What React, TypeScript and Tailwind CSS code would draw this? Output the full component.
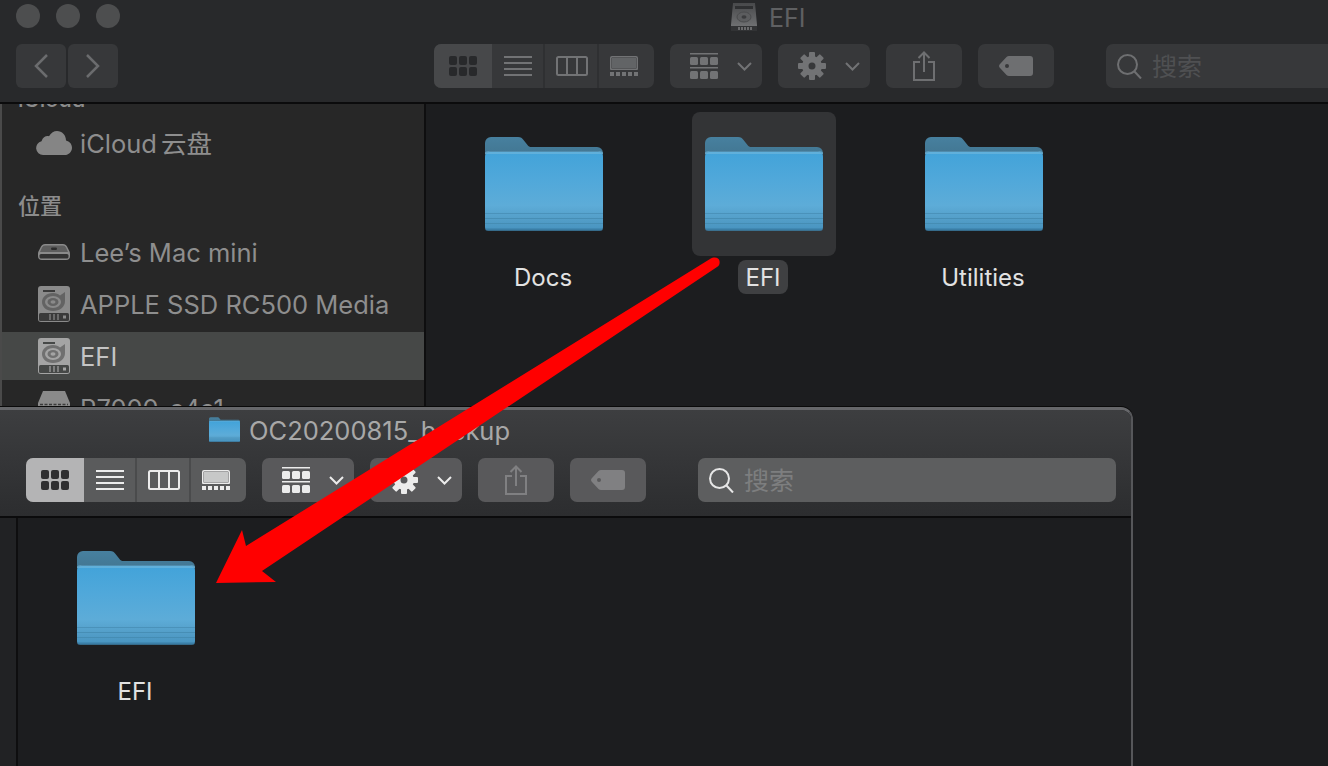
const font = "font-['Inter','Noto_Sans_CJK_SC',sans-serif]";

function Folder({ className }: { className: string }) {
  return (
    <svg viewBox="0 0 118 94" className={className}>
      <defs>
        <linearGradient id="folderBack" x1="0" y1="0" x2="0" y2="1">
          <stop offset="0" stopColor="#47809f" />
          <stop offset="1" stopColor="#3f7089" />
        </linearGradient>
        <linearGradient id="folderFront" x1="0" y1="0" x2="0" y2="1">
          <stop offset="0" stopColor="#42a3d9" />
          <stop offset="0.35" stopColor="#50a8da" />
          <stop offset="0.68" stopColor="#5dacd8" />
          <stop offset="0.84" stopColor="#549fc9" />
          <stop offset="1" stopColor="#4793bf" />
        </linearGradient>
      </defs>
      <path
        d="M0 6a6 6 0 0 1 6-6h27c3 0 4 1 5.500 3l4 5c1 1.500 2 2 4 2h65.500a6 6 0 0 1 6 6v14H0z"
        fill="url(#folderBack)"
      />
      <path
        d="M0 20a5 5 0 0 1 5-5h108a5 5 0 0 1 5 5v70a3.500 3.500 0 0 1-3.500 3.500H3.500A3.500 3.500 0 0 1 0 90z"
        fill="url(#folderFront)"
      />
      <path d="M0 15.500a5 5 0 0 1 5-1h108a5 5 0 0 1 5 1v1.500H0z" fill="#6cb5dc" opacity="0.7" />
      <rect x="0" y="76" width="118" height="1" fill="#4187ad" opacity="0.6" />
      <rect x="0" y="81" width="118" height="1" fill="#4187ad" opacity="0.7" />
      <rect x="0" y="86" width="118" height="1" fill="#4187ad" opacity="0.7" />
      <rect x="0.5" y="91.500" width="117" height="2" rx="1" fill="#3a7ea6" />
    </svg>
  );
}

function Disk({ body, mark, dark }: { body: string; mark: string; dark: string }) {
  return (
    <svg viewBox="0 0 32 36" className="h-[36px] w-[32px]">
      <path d="M3 0h26a3 3 0 0 1 3 3v30a3 3 0 0 1-3 3H3a3 3 0 0 1-3-3V3a3 3 0 0 1 3-3z" fill={body} />
      <rect x="5" y="4" width="12" height="2" fill={dark} />
      <path
        d="M27 6v9c0 6-5 10-12 10C8.500 25 4 21 4 16s4.500-9 11-9c3 0 5.500 1 7 2.500z"
        fill={mark}
      />
      <ellipse cx="15" cy="16" rx="8" ry="6" fill={body} />
      <ellipse cx="15" cy="16" rx="5.500" ry="4" fill={mark} />
      <ellipse cx="15" cy="16" rx="2.500" ry="1.800" fill={body} />
      <rect x="1" y="27" width="30" height="8" rx="1.500" fill={dark} />
      <path d="M12 28v6M16 28v6M20 28v6" stroke={body} strokeWidth="1.200" />
      <rect x="25" y="29.500" width="3" height="3" fill={body} />
    </svg>
  );
}

function TitleDisk() {
  return (
    <svg viewBox="0 0 28 28" className="h-[28px] w-[28px]">
      <defs>
        <linearGradient id="titleDisk" x1="0" y1="0" x2="0" y2="1">
          <stop offset="0" stopColor="#48494b" />
          <stop offset="1" stopColor="#77787a" />
        </linearGradient>
      </defs>
      <path d="M3 0h22l2 22v6H1v-6z" fill="url(#titleDisk)" />
      <rect x="5" y="3" width="18" height="3" fill="#2f3032" />
      <ellipse cx="14" cy="14" rx="7" ry="5" fill="#5c5d5f" stroke="#4a4b4d" />
      <ellipse cx="14" cy="14" rx="2.500" ry="1.800" fill="#3b3c3e" />
      <rect x="1" y="23" width="26" height="5" fill="#323335" />
      <path d="M9 24v3M12 24v3M15 24v3M18 24v3M21 24v3" stroke="#a2a3a5" strokeWidth="1" />
    </svg>
  );
}

function ViewGrid({ className }: { className: string }) {
  return (
    <svg viewBox="0 0 28 20" className={className} fill="currentColor">
      {[0, 10, 20].map((x) =>
        [0, 11].map((y) => <rect key={`${x}${y}`} x={x} y={y} width="8" height="9" rx="2" />),
      )}
    </svg>
  );
}

function ViewList({ className }: { className: string }) {
  return (
    <svg viewBox="0 0 28 20" className={className} fill="currentColor">
      <rect y="0" width="28" height="2" />
      <rect y="6" width="28" height="2" />
      <rect y="12" width="28" height="2" />
      <rect y="18" width="28" height="2" />
    </svg>
  );
}

function ViewColumns({ className }: { className: string }) {
  return (
    <svg viewBox="0 0 32 20" className={className} fill="none" stroke="currentColor" strokeWidth="2">
      <rect x="1" y="1" width="30" height="18" rx="1.500" />
      <path d="M11 1v18M21 1v18" />
    </svg>
  );
}

function ViewGallery({ className }: { className: string }) {
  return (
    <svg viewBox="0 0 28 20" className={className} fill="currentColor">
      <path d="M2 0h24a2 2 0 0 1 2 2v11a1 1 0 0 1-1 1H1a1 1 0 0 1-1-1V2a2 2 0 0 1 2-2zM2 1.500a.5.5 0 0 0-.5.5v10.500h25V2a.5.5 0 0 0-.5-.5z" />
      <rect x="2" y="2" width="24" height="10" opacity="0.75" />
      {[0, 6, 12, 18, 24].map((x) => (
        <rect key={x} x={x} y="16" width="4" height="4" />
      ))}
    </svg>
  );
}

function Arrange({ className }: { className: string }) {
  return (
    <svg viewBox="0 0 28 26" className={className} fill="currentColor">
      <rect y="0" width="28" height="1.500" />
      <rect y="14" width="28" height="1.500" />
      {[0, 10, 20].map((x) => (
        <g key={x}>
          <rect x={x} y="4" width="8" height="8" rx="1.500" />
          <rect x={x} y="18" width="8" height="8" rx="1.500" />
        </g>
      ))}
    </svg>
  );
}

function Chevron({ className }: { className: string }) {
  return (
    <svg viewBox="0 0 15 9" className={className} fill="none" stroke="currentColor" strokeWidth="2">
      <path d="M1 1l6.500 6.500L14 1" />
    </svg>
  );
}

function Gear({ className }: { className: string }) {
  const teeth = [0, 45, 90, 135, 180, 225, 270, 315];
  return (
    <svg viewBox="0 0 28 28" className={className} fill="currentColor">
      {teeth.map((a) => (
        <rect key={a} x="11" y="0" width="6" height="7" rx="1" transform={`rotate(${a} 14 14)`} />
      ))}
      <path
        fillRule="evenodd"
        d="M14 4a10 10 0 1 1 0 20a10 10 0 0 1 0-20zM14 10.500a3.500 3.500 0 1 0 0 7a3.500 3.500 0 0 0 0-7z"
      />
    </svg>
  );
}

function Share({ className }: { className: string }) {
  return (
    <svg viewBox="0 0 22 30" className={className} fill="none" stroke="currentColor" strokeWidth="2">
      <path d="M7 11H1v18h20V11h-6" />
      <path d="M11 21V1.500M5.500 7L11 1.500 16.500 7" />
    </svg>
  );
}

function Tag({ className }: { className: string }) {
  return (
    <svg viewBox="0 0 34 20" className={className} fill="currentColor">
      <path
        fillRule="evenodd"
        d="M10 0h21a3 3 0 0 1 3 3v14a3 3 0 0 1-3 3H10c-1 0-1.800-.4-2.500-1L1 12c-1.300-1.200-1.300-2.800 0-4l6.500-7C8.200.4 9 0 10 0zM8 8a2 2 0 1 0 0 4a2 2 0 0 0 0-4z"
      />
    </svg>
  );
}

function SearchIcon({ className }: { className: string }) {
  return (
    <svg viewBox="0 0 25 25" className={className} fill="none" stroke="currentColor" strokeWidth="2">
      <circle cx="10.500" cy="10.500" r="9.500" />
      <path d="M17 17l7 7.500" />
    </svg>
  );
}

type Theme = {
  seg: string;
  active: string;
  activeIcon: string;
  icon: string;
  divider: string;
  btn: string;
  muted: string;
  search: string;
  searchIcon: string;
  searchText: string;
  searchWidth: string;
};

function Toolbar({ t }: { t: Theme }) {
  return (
    <div className="flex h-[44px] items-stretch">
      <div className={`flex w-[220px] overflow-hidden rounded-[7px] ${t.seg} ${t.icon}`}>
        <div className={`flex w-[58px] items-center justify-center ${t.active} ${t.activeIcon}`}>
          <ViewGrid className="h-[20px] w-[28px]" />
        </div>
        <div className={`flex w-[53px] items-center justify-center border-r-2 ${t.divider}`}>
          <ViewList className="h-[20px] w-[28px]" />
        </div>
        <div className={`flex w-[54px] items-center justify-center border-r-2 pl-[2px] ${t.divider}`}>
          <ViewColumns className="h-[20px] w-[32px]" />
        </div>
        <div className="flex flex-1 items-center justify-center pr-[6px]">
          <ViewGallery className="h-[20px] w-[28px]" />
        </div>
      </div>
      <div className={`ml-4 flex w-[92px] items-center gap-[19px] rounded-[7px] pl-[20px] ${t.btn} ${t.icon}`}>
        <Arrange className="h-[26px] w-[28px]" />
        <Chevron className="h-[9px] w-[15px]" />
      </div>
      <div className={`ml-4 flex w-[92px] items-center gap-[19px] rounded-[7px] pl-[20px] ${t.btn} ${t.icon}`}>
        <Gear className="h-[28px] w-[28px]" />
        <Chevron className="h-[9px] w-[15px]" />
      </div>
      <div className={`ml-4 flex w-[76px] items-center justify-center rounded-[7px] ${t.btn} ${t.muted}`}>
        <Share className="h-[30px] w-[22px]" />
      </div>
      <div className={`ml-4 flex w-[76px] items-center justify-center rounded-[7px] ${t.btn} ${t.muted}`}>
        <Tag className="h-[20px] w-[34px]" />
      </div>
      <div className={`ml-[52px] flex items-center rounded-[7px] pl-[11px] ${t.searchWidth} ${t.search}`}>
        <SearchIcon className={`h-[25px] w-[25px] ${t.searchIcon}`} />
        <span className={`ml-[10px] pt-[2px] text-[25px] leading-none ${t.searchText}`}>搜索</span>
      </div>
    </div>
  );
}

const backTheme: Theme = {
  seg: 'bg-[#37383a]',
  active: 'bg-[#47484a]',
  activeIcon: 'text-[#28292b]',
  icon: 'text-[#727375]',
  divider: 'border-[#2f3032]',
  btn: 'bg-[#37383a]',
  muted: 'text-[#6e6f71]',
  search: 'bg-[#37383a]',
  searchIcon: 'text-[#6e6f71]',
  searchText: 'text-[#4f5052]',
  searchWidth: 'w-[240px]',
};

const frontTheme: Theme = {
  seg: 'bg-[#5a5b5c]',
  active: 'bg-[#b4b4b5]',
  activeIcon: 'text-[#2e2e30]',
  icon: 'text-[#ececec]',
  divider: 'border-[#4a4b4c]',
  btn: 'bg-[#59595b]',
  muted: 'text-[#808082]',
  search: 'bg-[#5d5e5f]',
  searchIcon: 'text-[#e6e6e6]',
  searchText: 'text-[#7d7e7f]',
  searchWidth: 'w-[418px]',
};

function SidebarRow({
  icon,
  children,
  selected,
}: {
  icon: React.ReactNode;
  children: React.ReactNode;
  selected?: boolean;
}) {
  return (
    <div className={`flex h-[48px] items-center ${selected ? 'bg-[#464847] text-[#c4c4c4]' : 'text-[#8e8e8e]'}`}>
      <div className="-mr-[26px] flex w-[104px] shrink-0 justify-center">{icon}</div>
      <span className="whitespace-nowrap pt-[2px] text-[25.500px] leading-none">{children}</span>
    </div>
  );
}

function FolderItem({ label, selected }: { label: string; selected?: boolean }) {
  return (
    <div className="flex w-[220px] flex-col items-center">
      <div className={`flex h-[144px] w-[144px] items-start justify-center rounded-[8px] pt-[25px] ${selected ? 'bg-[#333436]' : ''}`}>
        <Folder className="h-[94px] w-[118px]" />
      </div>
      <span className={`mr-[2px] mt-[4px] flex h-[34px] items-center rounded-[8px] px-[7px] pt-[2px] text-[24px] leading-none text-[#e2e2e2] ${selected ? 'bg-[#3f4042]' : ''}`}>
        {label}
      </span>
    </div>
  );
}

export default function App() {
  return (
    <div className={`relative h-[766px] w-[1328px] overflow-hidden bg-[#1c1d1f] ${font}`}>
      {/* window behind */}
      <div className="flex h-full flex-col">
        <div className="h-[104px] shrink-0 border-b-2 border-[#0b0b0c] bg-[#28292b] pl-[16px]">
          <div className="flex h-[32px] items-start gap-[16px] pt-[4px]">
            <div className="h-[24px] w-[24px] rounded-full bg-[#4d4e4f]" />
            <div className="h-[24px] w-[24px] rounded-full bg-[#4d4e4f]" />
            <div className="h-[24px] w-[24px] rounded-full bg-[#4d4e4f]" />
            <div className="-mt-[2px] ml-[594px] flex items-center gap-[11px]">
              <TitleDisk />
              <span className="pt-[4px] text-[25px] leading-none text-[#5f6062]">EFI</span>
            </div>
          </div>
          <div className="mt-[12px] flex">
            <div className="flex gap-[2px] text-[#6b6c6e]">
              <div className="flex h-[44px] w-[50px] items-center justify-center rounded-[6px] bg-[#37383a]">
                <svg viewBox="0 0 14 24" className="h-[24px] w-[14px]" fill="none" stroke="currentColor" strokeWidth="2.500">
                  <path d="M13 1L2 12l11 11" />
                </svg>
              </div>
              <div className="flex h-[44px] w-[50px] items-center justify-center rounded-[6px] bg-[#37383a]">
                <svg viewBox="0 0 14 24" className="h-[24px] w-[14px]" fill="none" stroke="currentColor" strokeWidth="2.500">
                  <path d="M1 1l11 11L1 23" />
                </svg>
              </div>
            </div>
            <div className="ml-[316px]">
              <Toolbar t={backTheme} />
            </div>
          </div>
        </div>
        <div className="flex flex-1 overflow-hidden">
          <div className="w-[426px] shrink-0 overflow-hidden border-x-2 border-l-[#4a4a4a] border-r-[#0e0e0f] bg-[#272727]">
            <div className="-mt-[17px] flex h-[24px] items-center pl-[16px] text-[22px] font-medium leading-none text-[#8c8c8c]">
              iCloud
            </div>
            <div className="mt-[8px]">
              <SidebarRow
                icon={
                  <svg viewBox="0 0 36 24" className="h-[24px] w-[36px]" fill="#858585">
                    <path d="M7 24a7 7 0 0 1-1.500-13.800C7 6 10 4.500 13 5.200 15 1.800 18 0 21 0c5 0 9 4 9 9.500 3.500.8 6 3.600 6 7.200 0 4-3.300 7.300-7.300 7.300z" />
                  </svg>
                }
              >
                iCloud<span className="ml-[4px]">云盘</span>
              </SidebarRow>
            </div>
            <div className="mt-[25px] flex h-[28px] items-center pl-[16px] text-[22px] font-medium leading-none text-[#8c8c8c]">
              位置
            </div>
            <div className="mt-[8px] flex flex-col gap-[4px]">
              <SidebarRow
                icon={
                  <svg viewBox="0 0 32 16" className="h-[16px] w-[32px]">
                    <path d="M7 0h18c2 0 3 1 4 2.500l2 4c.6 1 1 2 1 3.500v2a4 4 0 0 1-4 4H4a4 4 0 0 1-4-4v-2c0-1.500.4-2.500 1-3.500l2-4C4 1 5 0 7 0z" fill="#8a8a8a" />
                    <path d="M7 1.500h18c1.500 0 2.300.7 3 2l2 4.500H2l2-4.500c.7-1.300 1.500-2 3-2z" fill="#5e5e5e" />
                    <rect x="1.500" y="10" width="29" height="4.500" rx="1.500" fill="#323232" />
                    <rect x="13" y="3.500" width="6" height="2.500" rx="1.200" fill="#2c2c2c" />
                  </svg>
                }
              >
                Lee’s Mac mini
              </SidebarRow>
              <SidebarRow icon={<Disk body="#8a8a8a" mark="#636363" dark="#3a3a3a" />}>
                APPLE SSD RC500 Media
              </SidebarRow>
              <SidebarRow selected icon={<Disk body="#a4a4a4" mark="#707070" dark="#464847" />}>
                EFI
              </SidebarRow>
              <SidebarRow
                icon={
                  <svg viewBox="0 0 32 36" className="h-[36px] w-[32px]">
                    <path d="M5 1h22l5 12v4H0v-4z" fill="#8a8a8a" />
                    <path d="M2 14.500h28" stroke="#3a3a3a" strokeWidth="1.500" strokeDasharray="3 1.500" />
                  </svg>
                }
              >
                R7000_c4a1
              </SidebarRow>
            </div>
          </div>
          <div className="flex items-start pl-[8px] pt-[8px]">
            <FolderItem label="Docs" />
            <FolderItem label="EFI" selected />
            <FolderItem label="Utilities" />
          </div>
        </div>
      </div>

      {/* window in front */}
      <div className="absolute left-0 top-[407px] flex h-[360px] w-[1133px] flex-col overflow-hidden rounded-tr-[12px] border-r-2 border-t-[3px] border-r-[#56575a] border-t-[#66676a] bg-[#1c1d1f] shadow-[0_-1px_0_#0a0a0a]">
        <div className="h-[108px] shrink-0 border-b-2 border-[#0b0b0c] bg-gradient-to-b from-[#3d3e40] to-[#2c2d2f]">
          <div className="flex h-[39px] items-center pl-[209px]">
            <Folder className="h-[25px] w-[31px]" />
            <span className="ml-[9px] whitespace-nowrap pt-[3px] text-[25.500px] leading-none text-[#a8a8a8]">OC20200815_backup</span>
          </div>
          <div className="ml-[26px] mt-[9px]">
            <Toolbar t={frontTheme} />
          </div>
        </div>
        <div className="flex flex-1">
          <div className="w-[18px] shrink-0 border-r-2 border-[#0e0e0f] bg-[#212224]" />
          <div className="pl-[59px] pt-[33px]">
            <div className="flex w-[118px] flex-col items-center">
              <Folder className="h-[94px] w-[118px] shrink-0" />
              <span className="mr-[2px] mt-[35px] text-[24px] leading-none text-[#e2e2e2]">EFI</span>
            </div>
          </div>
        </div>
      </div>

      {/* red arrow drawn over both windows */}
      <svg viewBox="0 0 1328 766" className="pointer-events-none absolute inset-0 h-[766px] w-[1328px]">
        <path
          d="M710 259c5-3 9-1 9.500 2 .5 3-.5 5-2.500 6L262 571l14 11-60 1 26-53 4 16z"
          fill="#ff0000"
        />
      </svg>
    </div>
  );
}
